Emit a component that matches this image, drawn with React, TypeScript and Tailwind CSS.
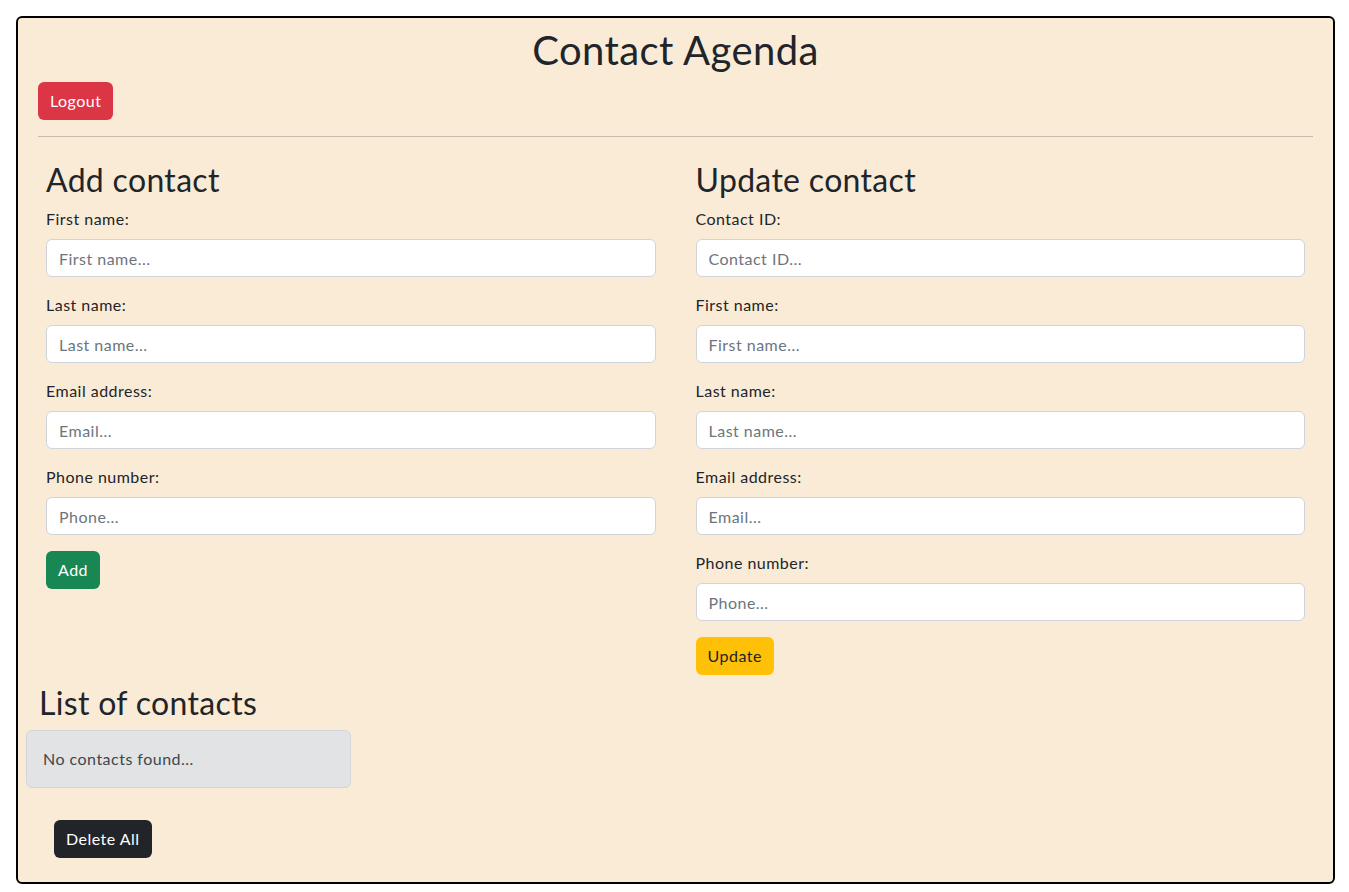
const inputCls =
  'block w-full h-[38px] px-3 bg-white border border-[#ced4da] rounded-md text-base text-[#212529] placeholder:text-[#6c757d] focus:outline-none';

type Field = { label: string; placeholder: string };

const addFields: Field[] = [
  { label: 'First name:', placeholder: 'First name...' },
  { label: 'Last name:', placeholder: 'Last name...' },
  { label: 'Email address:', placeholder: 'Email...' },
  { label: 'Phone number:', placeholder: 'Phone...' },
];

const updateFields: Field[] = [
  { label: 'Contact ID:', placeholder: 'Contact ID...' },
  ...addFields,
];

const FormField = ({ label, placeholder }: Field) => (
  <div className="mb-4">
    <label className="block mb-2 leading-6">{label}</label>
    <input type="text" placeholder={placeholder} className={inputCls} />
  </div>
);

export default function App() {
  return (
    <div
      className="pt-4 pl-4 pr-[14px] text-[#212529] tracking-[0.03em]"
      style={{ fontFamily: 'Lato, "Noto Sans", sans-serif' }}
    >
      <div className="border-2 border-black rounded-md bg-[#faebd7] px-5 pb-6">
        <h1 className="mt-2 text-[40px] leading-[48px] text-center tracking-[0.01em]">Contact Agenda</h1>
        <button className="mt-2 h-[38px] px-3 rounded-md bg-[#dc3545] text-white text-base">
          Logout
        </button>
        <hr className="my-4 border-0 border-t border-[#c5baab]" />

        <div className="grid grid-cols-2 gap-10 px-2 pt-2">
          <div>
            <h2 className="text-[32px] leading-[38px] mb-2 tracking-[0.01em]">Add contact</h2>
            {addFields.map((f) => (
              <FormField key={f.label} {...f} />
            ))}
            <button className="h-[38px] px-3 rounded-md bg-[#198754] text-white text-base">Add</button>
          </div>
          <div>
            <h2 className="text-[32px] leading-[38px] mb-2 tracking-[0.01em]">Update contact</h2>
            {updateFields.map((f) => (
              <FormField key={f.label} {...f} />
            ))}
            <button className="h-[38px] px-3 rounded-md bg-[#ffc107] text-[#212529] text-base">Update</button>
          </div>
        </div>

        <h2 className="mt-[9px] pl-px text-[32px] leading-[38px] mb-2 tracking-[0.01em]">List of contacts</h2>
        <div className="-ml-3 w-[325px] p-4 leading-6 rounded-md bg-[#e2e3e5] border border-[#d3d6d8] text-[#41464b]">
          No contacts found...
        </div>
        <button className="mt-8 ml-4 h-[38px] px-3 rounded-md bg-[#212529] text-white text-base">
          Delete All
        </button>
      </div>
    </div>
  );
}
